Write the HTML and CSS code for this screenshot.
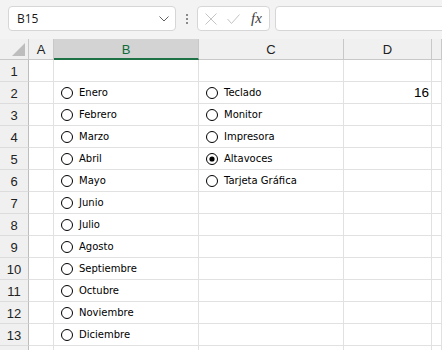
FILE: index.html
```html
<!DOCTYPE html>
<html>
<head>
	<meta charset="UTF-8">
	<title>Hoja1</title>
	<link rel="stylesheet" href="styles.css">
</head>
<body>

	<!-- barra de fórmulas -->
	<div class="toolbar">
		<div class="namebox">
			<span>B15</span>
			<svg class="chev" width="10" height="6" viewBox="0 0 10 6"><path d="M0.5 0.5 L5 5 L9.5 0.5"/></svg>
		</div>
		<div class="grip"><i></i><i></i><i></i></div>
		<div class="fnbox">
			<svg class="ico" width="12" height="12" viewBox="0 0 12 12"><path d="M0.5 0.5 L11.5 11.5 M11.5 0.5 L0.5 11.5"/></svg>
			<svg class="ico" width="13" height="10" viewBox="0 0 13 10"><path d="M0.5 5 L4.5 9.5 L12.5 0.5"/></svg>
			<span class="fx">fx</span>
		</div>
		<div class="formula"></div>
	</div>

	<div class="sheet">
		<div class="row head">
			<div class="corner"><svg width="13" height="13" viewBox="0 0 13 13"><polygon points="13,0 13,13 0,13"/></svg></div>
			<div class="ch">A</div>
			<div class="ch sel">B</div>
			<div class="ch">C</div>
			<div class="ch">D</div>
			<div class="ch"></div>
		</div>

		<div class="row"><div class="rh">1</div><div class="c"></div><div class="c"></div><div class="c"></div><div class="c"></div><div class="c"></div></div>
		<div class="row"><div class="rh">2</div><div class="c"></div>
			<div class="c"><label class="opt"><svg class="radio" viewBox="0 0 12 12"><circle cx="6" cy="6" r="5.5"/></svg>Enero</label></div>
			<div class="c"><label class="opt"><svg class="radio" viewBox="0 0 12 12"><circle cx="6" cy="6" r="5.5"/></svg>Teclado</label></div>
			<div class="c num">16</div><div class="c"></div></div>
		<div class="row"><div class="rh">3</div><div class="c"></div>
			<div class="c"><label class="opt"><svg class="radio" viewBox="0 0 12 12"><circle cx="6" cy="6" r="5.5"/></svg>Febrero</label></div>
			<div class="c"><label class="opt"><svg class="radio" viewBox="0 0 12 12"><circle cx="6" cy="6" r="5.5"/></svg>Monitor</label></div>
			<div class="c"></div><div class="c"></div></div>
		<div class="row"><div class="rh">4</div><div class="c"></div>
			<div class="c"><label class="opt"><svg class="radio" viewBox="0 0 12 12"><circle cx="6" cy="6" r="5.5"/></svg>Marzo</label></div>
			<div class="c"><label class="opt"><svg class="radio" viewBox="0 0 12 12"><circle cx="6" cy="6" r="5.5"/></svg>Impresora</label></div>
			<div class="c"></div><div class="c"></div></div>
		<div class="row"><div class="rh">5</div><div class="c"></div>
			<div class="c"><label class="opt"><svg class="radio" viewBox="0 0 12 12"><circle cx="6" cy="6" r="5.5"/></svg>Abril</label></div>
			<div class="c"><label class="opt"><svg class="radio" viewBox="0 0 12 12"><circle cx="6" cy="6" r="5.5"/><circle class="dot" cx="6" cy="6" r="2.6"/></svg>Altavoces</label></div>
			<div class="c"></div><div class="c"></div></div>
		<div class="row"><div class="rh">6</div><div class="c"></div>
			<div class="c"><label class="opt"><svg class="radio" viewBox="0 0 12 12"><circle cx="6" cy="6" r="5.5"/></svg>Mayo</label></div>
			<div class="c"><label class="opt"><svg class="radio" viewBox="0 0 12 12"><circle cx="6" cy="6" r="5.5"/></svg>Tarjeta Gráfica</label></div>
			<div class="c"></div><div class="c"></div></div>
		<div class="row"><div class="rh">7</div><div class="c"></div>
			<div class="c"><label class="opt"><svg class="radio" viewBox="0 0 12 12"><circle cx="6" cy="6" r="5.5"/></svg>Junio</label></div>
			<div class="c"></div><div class="c"></div><div class="c"></div></div>
		<div class="row"><div class="rh">8</div><div class="c"></div>
			<div class="c"><label class="opt"><svg class="radio" viewBox="0 0 12 12"><circle cx="6" cy="6" r="5.5"/></svg>Julio</label></div>
			<div class="c"></div><div class="c"></div><div class="c"></div></div>
		<div class="row"><div class="rh">9</div><div class="c"></div>
			<div class="c"><label class="opt"><svg class="radio" viewBox="0 0 12 12"><circle cx="6" cy="6" r="5.5"/></svg>Agosto</label></div>
			<div class="c"></div><div class="c"></div><div class="c"></div></div>
		<div class="row"><div class="rh">10</div><div class="c"></div>
			<div class="c"><label class="opt"><svg class="radio" viewBox="0 0 12 12"><circle cx="6" cy="6" r="5.5"/></svg>Septiembre</label></div>
			<div class="c"></div><div class="c"></div><div class="c"></div></div>
		<div class="row"><div class="rh">11</div><div class="c"></div>
			<div class="c"><label class="opt"><svg class="radio" viewBox="0 0 12 12"><circle cx="6" cy="6" r="5.5"/></svg>Octubre</label></div>
			<div class="c"></div><div class="c"></div><div class="c"></div></div>
		<div class="row"><div class="rh">12</div><div class="c"></div>
			<div class="c"><label class="opt"><svg class="radio" viewBox="0 0 12 12"><circle cx="6" cy="6" r="5.5"/></svg>Noviembre</label></div>
			<div class="c"></div><div class="c"></div><div class="c"></div></div>
		<div class="row"><div class="rh">13</div><div class="c"></div>
			<div class="c"><label class="opt"><svg class="radio" viewBox="0 0 12 12"><circle cx="6" cy="6" r="5.5"/></svg>Diciembre</label></div>
			<div class="c"></div><div class="c"></div><div class="c"></div></div>
		<!-- fila 14: solo se ve el borde superior -->
		<div class="row"><div class="rh"></div><div class="c"></div><div class="c"></div><div class="c"></div><div class="c"></div><div class="c"></div></div>
	</div>

</body>
</html>
```

FILE: styles.css
```css
html, body {
	height: 100%;
	margin: 0;
	overflow: hidden;
}

body {
	background-color: #f3f3f3;
	font-family: "Liberation Sans", Arial, sans-serif;
}

/* barra de fórmulas */
.toolbar {
	display: flex;
	align-items: flex-start;
	height: 39px;
	box-sizing: border-box;
	padding: 6px 0 0 8px;
}

.namebox {
	display: flex;
	align-items: center;
	justify-content: space-between;
	width: 168px;
	height: 25px;
	box-sizing: border-box;
	padding: 0 6px 0 8px;
	background: #ffffff;
	border: 1px solid #d6d6d6;
	border-radius: 4px;
	font: 12px "Open Sans", sans-serif;
	color: #1a1a1a;
}

.chev path {
	fill: none;
	stroke: #616161;
	stroke-width: 1;
}

.grip {
	display: flex;
	flex-direction: column;
	gap: 2px;
	margin: 8px 9px 0 10px;
}

.grip i {
	display: block;
	width: 2px;
	height: 2px;
	background: #8a8a8a;
}

.fnbox {
	display: flex;
	align-items: center;
	width: 73px;
	height: 25px;
	box-sizing: border-box;
	padding-left: 7px;
	background: #ffffff;
	border: 1px solid #d6d6d6;
	border-radius: 4px;
}

.ico path {
	fill: none;
	stroke: #c4c4c4;
	stroke-width: 1;
}

.ico + .ico {
	margin-left: 10px;
}

.fx {
	margin-left: 11px;
	font: italic 15px "Liberation Serif", serif;
	color: #3b3b3b;
}

.formula {
	flex: 1;
	height: 25px;
	margin: 0 -6px 0 5px;
	box-sizing: border-box;
	background: #ffffff;
	border: 1px solid #d6d6d6;
	border-radius: 4px;
}

/* hoja */
.sheet {
	background: #ffffff;
}

.row {
	display: grid;
	grid-template-columns: 29px 25px 145px 145px 88px 1fr;
	height: 22px;
	font-size: 13px;
	color: #222222;
}

.row > div {
	box-sizing: border-box;
	border-right: 1px solid #e1e1e1;
	border-bottom: 1px solid #e1e1e1;
}

.row.head {
	height: 21px;
	background: #f0f0f0;
}

.row.head > div {
	display: flex;
	align-items: center;
	justify-content: center;
	border-right-color: #c8c8c8;
	border-bottom-color: #c8c8c8;
	padding-top: 1px;
}

.row.head > .corner {
	align-items: flex-end;
	justify-content: flex-end;
	padding: 0 3px 3px 0;
}

.corner polygon {
	fill: #bdbdbd;
}

.row.head > .sel {
	background: #d3d3d3;
	color: #0f6b3a;
	border-bottom: 2px solid #1e7145;
}

.row > .rh {
	display: flex;
	align-items: flex-end;
	justify-content: center;
	padding-bottom: 2px;
	background: #f0f0f0;
	border-right-color: #bdbdbd;
	border-bottom-color: #dcdcdc;
}

.c {
	display: flex;
	align-items: center;
}

.num {
	justify-content: flex-end;
	align-items: flex-end;
	padding: 0 2px 3px 0;
	font-size: 13.5px;
	color: #000000;
}

/* botones de opción */
.opt {
	display: flex;
	align-items: center;
	gap: 6px;
	padding-left: 7px;
	font: 10px "DejaVu Sans", sans-serif;
	color: #000000;
	white-space: nowrap;
}

.radio {
	width: 12px;
	height: 12px;
}

.radio circle {
	fill: #ffffff;
	stroke: #000000;
	stroke-width: 1;
}

.radio .dot {
	fill: #000000;
	stroke: none;
}
```
